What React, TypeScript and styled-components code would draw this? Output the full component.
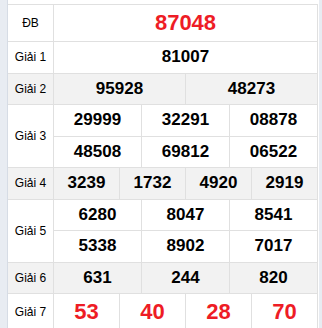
import React from "react";
import styled, { createGlobalStyle } from "styled-components";

const GlobalStyle = createGlobalStyle`
  html, body { margin: 0; padding: 0; }
  body {
    background: #e8ecf2;
    font-family: "Liberation Sans", Arial, sans-serif;
    color: #000;
  }
`;

const Page = styled.div`
  display: flex;
  min-height: 328px;
  background: #e8ecf2;
`;

const Panel = styled.div`
  margin-left: 7px;
  width: 310px;
  padding: 4px 1px 0 0;
  border-left: 1px solid #d6dce5;
  background: #fff;
`;

const Table = styled.div`
  display: flex;
  flex-direction: column;
  border-top: 1px solid #e0e0e0;
  border-right: 1px solid #e0e0e0;
`;

const Row = styled.div<{ $shade?: boolean }>`
  display: grid;
  grid-template-columns: 45px 1fr;
  border-bottom: 1px solid #e0e0e0;
  background: ${(p) => (p.$shade ? "#f2f2f2" : "#fff")};
`;

const Label = styled.div`
  display: flex;
  align-items: center;
  justify-content: center;
  font-size: 12px;
  color: #000;
`;

const Cells = styled.div<{ $cols: number }>`
  display: grid;
  grid-template-columns: repeat(${(p) => p.$cols}, 1fr);
  gap: 1px;
  padding-left: 1px;
  background: #e0e0e0;
`;

const Cell = styled.div<{ $shade?: boolean; $red?: boolean; $h: number; $big?: boolean }>`
  display: flex;
  align-items: center;
  justify-content: center;
  height: ${(p) => p.$h}px;
  background: ${(p) => (p.$shade ? "#f2f2f2" : "#fff")};
  font-weight: bold;
  font-size: ${(p) => (p.$big ? 22 : 17)}px;
  color: ${(p) => (p.$red ? "#ee1c25" : "#000")};
`;

type Prize = {
  label: string;
  cols: number;
  values: string[];
  red?: boolean;
  big?: boolean;
  h?: number;
};

const prizes: Prize[] = [
  { label: "ĐB", cols: 1, values: ["87048"], red: true, big: true, h: 36 },
  { label: "Giải 1", cols: 1, values: ["81007"] },
  { label: "Giải 2", cols: 2, values: ["95928", "48273"] },
  { label: "Giải 3", cols: 3, values: ["29999", "32291", "08878", "48508", "69812", "06522"] },
  { label: "Giải 4", cols: 4, values: ["3239", "1732", "4920", "2919"] },
  { label: "Giải 5", cols: 3, values: ["6280", "8047", "8541", "5338", "8902", "7017"] },
  { label: "Giải 6", cols: 3, values: ["631", "244", "820"] },
  { label: "Giải 7", cols: 4, values: ["53", "40", "28", "70"], red: true, big: true, h: 36 },
];

export default function App() {
  return (
    <>
      <GlobalStyle />
      <Page>
        <Panel>
          <Table>
            {prizes.map((p, i) => {
              const shade = i % 2 === 0 && i > 0;
              return (
                <Row key={p.label} $shade={shade}>
                  <Label>{p.label}</Label>
                  <Cells $cols={p.cols}>
                    {p.values.map((v, j) => (
                      <Cell
                        key={j}
                        $shade={shade}
                        $red={p.red}
                        $big={p.big}
                        $h={p.h ?? 30.5}
                      >
                        {v}
                      </Cell>
                    ))}
                  </Cells>
                </Row>
              );
            })}
          </Table>
        </Panel>
      </Page>
    </>
  );
}
